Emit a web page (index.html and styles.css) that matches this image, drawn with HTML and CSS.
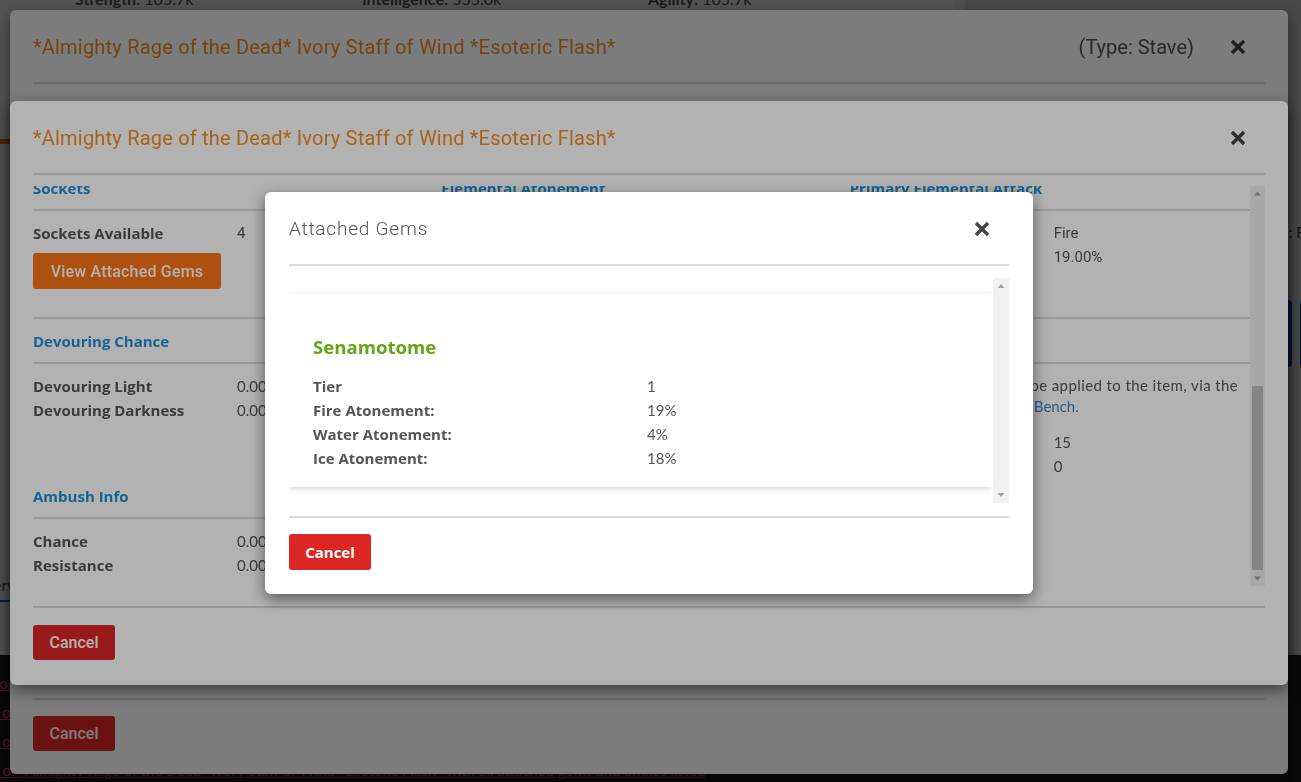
FILE: index.html
```html
<!DOCTYPE html>
<html lang="en">
<head>
<meta charset="utf-8">
<title>Attached Gems</title>
<link rel="stylesheet" href="styles.css">
</head>
<body>
<div class="page">
  <div class="pl">
    <div class="stats">
      <span><b>Strength:</b> 105.7k</span>
      <span><b>Intelligence:</b> 555.0k</span>
      <span><b>Agility:</b> 105.7k</span>
    </div>
    <div class="navline"></div>
    <div class="tabs"><span class="tab">Overview</span></div>
  </div>
  <div class="pr">
    <div class="hero">
      <svg width="301" height="148" viewBox="0 0 301 148">
        <rect width="301" height="148" fill="#000"/>
        <circle cx="294" cy="30" r="3" fill="#f0a030"/>
        <circle cx="297" cy="48" r="4" fill="#ddd"/>
        <circle cx="291" cy="72" r="2" fill="#eee"/>
        <circle cx="299" cy="95" r="3" fill="#ccc"/>
        <circle cx="293" cy="118" r="2.5" fill="#ddd"/>
        <circle cx="298" cy="135" r="2" fill="#eee"/>
      </svg>
    </div>
    <p class="side-txt">Type: Fire</p>
    <div class="side-btns"><span class="sbtn"></span><span class="sbtn"></span></div>
  </div>
  <div class="foot">
    <a class="flink">Logs/gems/senamotome attached to item</a>
    <a class="flink">s of *Almighty Rage of the Dead* Ivory Staff</a>
    <a class="flink">s of *Almighty Rage of the Dead* Ivory Staff</a>
    <a class="flink">s of *Almighty Rage of the Dead* Ivory Staff of Wind *Esoteric Flash* with all attached gems and affixes listed</a>
  </div>
</div>

<div class="backdrop"></div>
<div class="modal m1">
  <div class="mhead">
    <span class="mtitle">*Almighty Rage of the Dead* Ivory Staff of Wind *Esoteric Flash*</span>
    <span class="mtype">(Type: Stave)</span>
    <svg class="close" width="14" height="16" viewBox="0 0 14 16"><path d="M2.2 3.2 L11.8 12.8 M11.8 3.2 L2.2 12.8" stroke="#444" stroke-width="3.4" stroke-linecap="square"/></svg>
  </div>
  <div class="mbody"></div>
  <div class="mfoot"><button class="btn-red">Cancel</button></div>
</div>

<div class="backdrop"></div>
<div class="modal m2">
  <div class="mhead">
    <span class="mtitle">*Almighty Rage of the Dead* Ivory Staff of Wind *Esoteric Flash*</span>
    <svg class="close" width="14" height="16" viewBox="0 0 14 16"><path d="M2.2 3.2 L11.8 12.8 M11.8 3.2 L2.2 12.8" stroke="#444" stroke-width="3.4" stroke-linecap="square"/></svg>
  </div>
  <div class="mbody m2body">
    <div class="scroller">
      <div class="viewport">
        <div class="sheet">
          <div class="col">
            <div class="sec-h">Sockets</div>
            <div class="rows">
              <div class="kv"><span class="k">Sockets Available</span><span class="v alt">4</span></div>
            </div>
            <button class="btn-orange">View Attached Gems</button>
          </div>
          <div class="col">
            <div class="sec-h">Elemental Atonement</div>
            <div class="rows">
              <div class="kv"><span class="k">Fire Atonement</span><span class="v">19.00%</span></div>
              <div class="kv"><span class="k">Water Atonement</span><span class="v">4.00%</span></div>
              <div class="kv"><span class="k">Ice Atonement</span><span class="v">18.00%</span></div>
            </div>
          </div>
          <div class="col">
            <div class="sec-h">Primary Elemental Attack</div>
            <div class="rows">
              <div class="kv"><span class="k">Element</span><span class="v alt">Fire</span></div>
              <div class="kv"><span class="k">Damage</span><span class="v alt">19.00%</span></div>
            </div>
          </div>

          <div class="hr"></div>

          <div class="col">
            <div class="sec-h">Devouring Chance</div>
            <div class="rows">
              <div class="kv"><span class="k">Devouring Light</span><span class="v">0.00%</span></div>
              <div class="kv"><span class="k">Devouring Darkness</span><span class="v">0.00%</span></div>
            </div>
          </div>
          <div class="col">
            <div class="sec-h">Resurrection Chance</div>
            <div class="rows">
              <div class="kv"><span class="k">Chance</span><span class="v">0.00%</span></div>
            </div>
          </div>
          <div class="col">
            <div class="sec-h">Holy Info</div>
            <p class="note"><span class="wide">Holy Stacks can now only be applied to the item, via the</span><br>Purgatory Smith Holy <a class="lnk">Work Bench.</a></p>
            <div class="kv"><span class="k">Holy Stacks</span><span class="v">15</span></div>
            <div class="kv"><span class="k">Holy Stacks Applied</span><span class="v">0</span></div>
          </div>

          <div class="col">
            <div class="sec-h tight">Ambush Info</div>
            <div class="rows">
              <div class="kv"><span class="k">Chance</span><span class="v">0.00%</span></div>
              <div class="kv"><span class="k">Resistance</span><span class="v">0.00%</span></div>
            </div>
          </div>
          <div class="col">
            <div class="sec-h tight">Counter Info</div>
            <div class="rows">
              <div class="kv"><span class="k">Chance</span><span class="v">0.00%</span></div>
              <div class="kv"><span class="k">Resistance</span><span class="v">0.00%</span></div>
            </div>
          </div>
          <div class="col"></div>
        </div>
      </div>
      <div class="sbar">
        <div class="sb-btn"><svg width="15" height="15" viewBox="0 0 15 15"><path d="M4 9.5 L7.5 5.5 L11 9.5 Z" fill="#a3a3a3"/></svg></div>
        <div class="sb-track"><div class="sb-thumb big"></div></div>
        <div class="sb-btn"><svg width="15" height="15" viewBox="0 0 15 15"><path d="M4 5.5 L7.5 9.5 L11 5.5 Z" fill="#a3a3a3"/></svg></div>
      </div>
    </div>
  </div>
  <div class="mfoot"><button class="btn-red">Cancel</button></div>
</div>

<div class="backdrop"></div>
<div class="modal m3">
  <div class="mhead">
    <span class="gtitle">Attached Gems</span>
    <svg class="close" width="14" height="16" viewBox="0 0 14 16"><path d="M2.2 3.2 L11.8 12.8 M11.8 3.2 L2.2 12.8" stroke="#444" stroke-width="3.4" stroke-linecap="square"/></svg>
  </div>
  <div class="mbody m3body">
    <div class="scroller s3">
      <div class="viewport">
        <div class="gem-list">
          <div class="gem-card">
            <div class="gem-name">Senamotome</div>
            <div class="gkv"><span class="k">Tier</span><span class="v">1</span></div>
            <div class="gkv"><span class="k">Fire Atonement:</span><span class="v">19%</span></div>
            <div class="gkv"><span class="k">Water Atonement:</span><span class="v">4%</span></div>
            <div class="gkv"><span class="k">Ice Atonement:</span><span class="v">18%</span></div>
          </div>
        </div>
      </div>
      <div class="sbar sbar3">
        <div class="sb-btn"><svg width="16" height="16" viewBox="0 0 16 16"><path d="M4.5 10 L8 6 L11.5 10 Z" fill="#a3a3a3"/></svg></div>
        <div class="sb-track"></div>
        <div class="sb-btn"><svg width="16" height="16" viewBox="0 0 16 16"><path d="M4.5 6 L8 10 L11.5 6 Z" fill="#a3a3a3"/></svg></div>
      </div>
    </div>
  </div>
  <div class="mfoot"><button class="btn-red">Cancel</button></div>
</div>
</body>
</html>
```
FILE: styles.css
```css
* { box-sizing: border-box; }
html, body { margin: 0; padding: 0; }
body {
  width: 1301px;
  height: 782px;
  overflow: hidden;
  font-family: Lato, "Noto Sans", sans-serif;
  color: #555;
  background: #f8f8f8;
}

/* ---------- page behind the modals ---------- */
.page {
  display: grid;
  grid-template-columns: 965px 1fr;
  grid-template-rows: 655px 127px;
  height: 782px;
}
.pl {
  background: #f8f8f8;
  display: flex;
  flex-direction: column;
  border-right: 10px solid #ececec;
}
.stats {
  display: grid;
  grid-template-columns: 287px 286px 1fr;
  padding-left: 75px;
  margin-top: -11px;
  font-size: 16px;
  line-height: 20px;
  color: #555;
}
.stats b { font-weight: 700; }
.navline {
  margin-top: 130px;
  height: 5px;
  width: 220px;
  background: #f97316;
}
.tabs {
  margin-top: auto;
  margin-bottom: 53px;
  height: 32px;
  border-bottom: 2px solid #2563eb;
  font-size: 15px;
  line-height: 30px;
}
.tab { display: inline-block; margin-left: -26px; color: #444; }
.pr {
  background: #d8d8d8;
  display: flex;
  flex-direction: column;
}
.hero { margin-top: 12px; height: 148px; overflow: hidden; }
.hero svg { display: block; }
.side-txt {
  margin: 62px 0 0 0;
  padding-left: 292px;
  font-size: 15px;
  line-height: 20px;
  white-space: nowrap;
  overflow: hidden;
  color: #333;
}
.side-btns {
  display: flex;
  gap: 8px;
  margin-top: 58px;
  padding-left: 235px;
}
.sbtn { width: 92px; height: 67px; background: #1e40af; border-radius: 4px; flex: none; }
.foot {
  grid-column: 1 / -1;
  background: #1d1d1d;
  padding-top: 14px;
  display: flex;
  flex-direction: column;
}
.flink {
  display: block;
  color: #e83e8c;
  text-decoration: underline;
  font-size: 15px;
  line-height: 29px;
  margin-left: -8px;
  white-space: nowrap;
}

/* ---------- backdrops and modals ---------- */
.backdrop {
  position: fixed;
  left: 0; top: 0; right: 0; bottom: 0;
  background: rgba(0, 0, 0, 0.3);
}
.modal {
  position: fixed;
  background: #fff;
  border-radius: 6px;
  box-shadow: 0 5px 15px rgba(0, 0, 0, 0.5);
  display: flex;
  flex-direction: column;
  padding: 0 23px;
}
.m1 { left: 10px; top: 10px; width: 1278px; height: 764px; }
.m2 { left: 10px; top: 101px; width: 1278px; height: 584px; }
.m3 { left: 265px; top: 192px; width: 768px; height: 402px; padding: 0 24px; }

.mhead {
  height: 74px;
  flex: none;
  display: flex;
  align-items: center;
  padding-top: 1px;
  border-bottom: 2px solid #dcdcdc;
}
.mtitle {
  font-family: Roboto, "Liberation Sans", sans-serif;
  font-size: 20px;
  letter-spacing: 0.2px;
  color: #ef8f26;
  white-space: nowrap;
}
.mtype {
  margin-left: auto;
  font-family: Roboto, "Liberation Sans", sans-serif;
  font-size: 20px;
  color: #555;
}
.close { flex: none; margin-left: auto; margin-right: 20px; display: block; }
.mtype + .close { margin-left: 37px; }
.gtitle {
  font-family: Roboto, "Liberation Sans", sans-serif;
  font-weight: 300;
  font-size: 19px;
  letter-spacing: 0.8px;
  color: #555;
}
.mbody { flex: 1; min-height: 0; }
.mfoot {
  flex: none;
  border-top: 2px solid #dcdcdc;
  padding: 16px 0 23px;
}
.m2 .mfoot { padding: 17px 0 25px; }
.m3 .mfoot { padding: 16px 0 24px; }

.btn-red, .btn-orange {
  border: 0;
  border-radius: 3px;
  color: #fff;
  font-family: Roboto, "Liberation Sans", sans-serif;
  font-weight: 500;
  font-size: 16px;
  padding: 0 16px;
  cursor: pointer;
}
.btn-red { background: #dc2626; height: 35px; width: 82px; }
.m3 .btn-red { height: 36px; font-family: "Open Sans", sans-serif; font-weight: 700; font-size: 15px; padding: 0; }
.btn-orange { background: #f97316; height: 36px; width: 188px; margin-top: 8px; display: block; letter-spacing: 0.2px; }

/* ---------- scrolling areas ---------- */
.m2body { padding: 11px 0 20px; }
.m3body { padding: 12px 0 13px; }
.scroller { display: flex; height: 100%; }
.viewport { flex: 1; min-width: 0; overflow: hidden; }
.sbar {
  flex: none;
  width: 15px;
  background: #f1f1f1;
  display: flex;
  flex-direction: column;
}
.sbar3 { width: 16px; }
.sb-btn { flex: none; height: 15px; }
.sbar3 .sb-btn { height: 16px; }
.sb-btn svg { display: block; }
.sb-track {
  flex: 1;
  display: flex;
  flex-direction: column;
  justify-content: flex-end;
  padding: 0 2px 1px;
}
.sb-thumb { background: #c1c1c1; }
.sb-thumb.big { height: 184px; }

/* ---------- item detail sheet ---------- */
.sheet {
  margin-top: -20px;
  display: grid;
  grid-template-columns: repeat(3, 1fr);
  column-gap: 8px;
  font-size: 15px;
}
.sec-h {
  padding: 11px 0 10px;
  line-height: 22px;
  border-bottom: 2px solid #dcdcdc;
  color: #1d8fd4;
  font-family: "Open Sans", sans-serif;
  font-weight: 700;
  font-size: 15px;
}
.sec-h.tight { padding-top: 7px; }
.rows { padding-top: 10px; }
.kv {
  display: grid;
  grid-template-columns: 204px 1fr;
  line-height: 24px;
  white-space: nowrap;
}
.k { font-family: "Open Sans", sans-serif; font-weight: 700; color: #555; font-size: 15px; }
.v { color: #555; }
.alt { font-family: Roboto, "Liberation Sans", sans-serif; }
.hr {
  grid-column: 1 / -1;
  height: 2px;
  background: #dcdcdc;
  margin-top: 24px;
}
.note {
  margin: 0 0 13px;
  padding-top: 11px;
  line-height: 21px;
  white-space: nowrap;
  color: #555;
}
.note .wide { letter-spacing: 0.4px; }
.lnk { color: #3b7fc4; }

/* ---------- attached gems ---------- */
.gem-list { padding-top: 14px; }
.gem-card {
  background: #fff;
  border-top: 1px solid #f2f2f2;
  box-shadow: 0 4px 6px -1px rgba(0, 0, 0, 0.1), 0 2px 4px -1px rgba(0, 0, 0, 0.06);
  padding: 40px 24px 17px;
  font-size: 15px;
}
.gem-name {
  color: #62a816;
  font-family: "Open Sans", sans-serif;
  font-weight: 700;
  font-size: 18.6px;
  line-height: 28px;
  margin-bottom: 13px;
}
.gkv {
  display: grid;
  grid-template-columns: 334px 1fr;
  line-height: 24px;
}
```
